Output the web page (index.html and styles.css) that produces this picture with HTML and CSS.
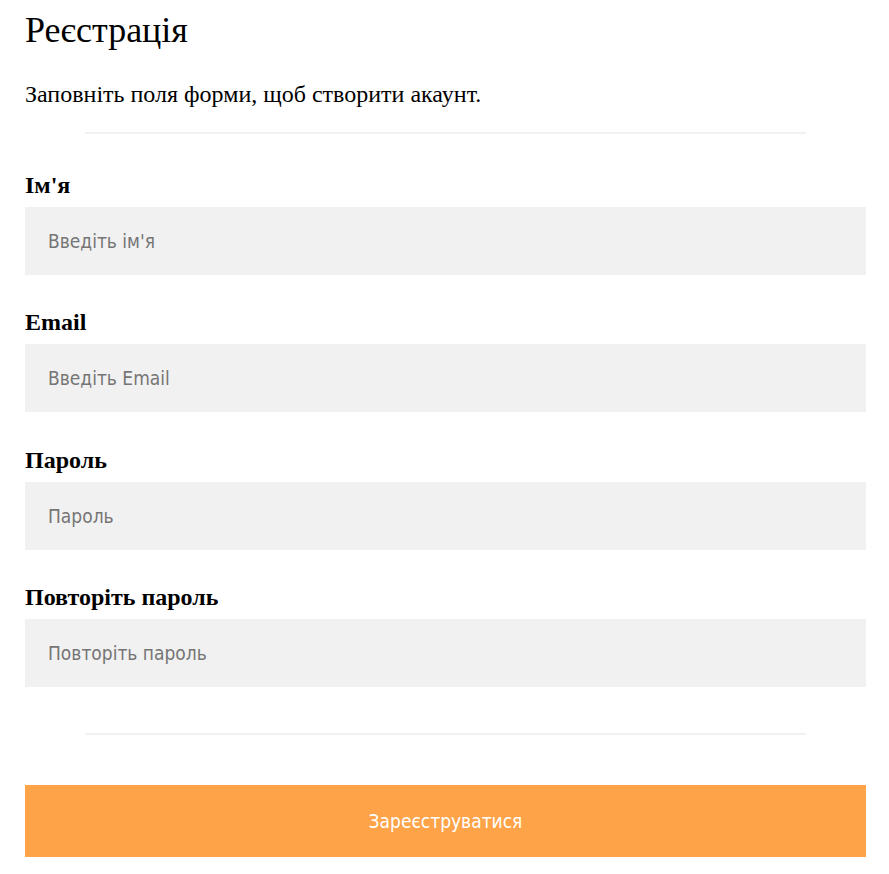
FILE: index.html
```html
<!DOCTYPE html>
<html lang="uk">
<head>
<meta charset="utf-8">
<title>Реєстрація</title>
<link rel="stylesheet" href="styles.css">
</head>
<body>
<form class="form">
  <h1 class="title">Реєстрація</h1>
  <p class="intro">Заповніть поля форми, щоб створити акаунт.</p>
  <hr class="divider">
  <label class="label" for="name">Ім'я</label>
  <input class="field" type="text" id="name" placeholder="Введіть ім'я">
  <label class="label" for="email">Email</label>
  <input class="field" type="text" id="email" placeholder="Введіть Email">
  <label class="label" for="psw">Пароль</label>
  <input class="field" type="password" id="psw" placeholder="Пароль">
  <label class="label" for="psw2">Повторіть пароль</label>
  <input class="field" type="password" id="psw2" placeholder="Повторіть пароль">
  <hr class="divider divider-bottom">
  <button class="submit" type="button">Зареєструватися</button>
</form>
</body>
</html>
```
FILE: styles.css
```css
html, body {
  margin: 0;
  padding: 0;
  background: #ffffff;
}
.form {
  display: flex;
  flex-direction: column;
  padding: 9px 23px 17px 25px;
  font-family: "Liberation Serif", "Times New Roman", serif;
  color: #000;
}
.title {
  margin: 0;
  font-size: 36px;
  line-height: 42px;
  font-weight: normal;
}
.intro {
  margin: 30px 0 0;
  font-size: 24px;
  line-height: 26px;
}
.divider {
  margin: 25px 60px 0;
  height: 0;
  border: 0;
  border-top: 1px solid #f1f1f1;
  border-bottom: 1px solid #f1f1f1;
}
.label {
  display: block;
  margin-top: 38px;
  font-size: 24px;
  line-height: 26px;
  font-weight: bold;
}
.field + .label {
  margin-top: 34.33px;
}
.field {
  margin: 9px 0 0;
  height: 68px;
  box-sizing: border-box;
  padding: 0 23px;
  border: 0;
  outline: none;
  background: #f1f1f1;
  font-family: "DejaVu Sans Condensed", "DejaVu Sans", Verdana, sans-serif;
  font-stretch: condensed;
  font-size: 19px;
  color: #333;
}
.field::placeholder {
  color: #757575;
}
.divider-bottom {
  margin-top: 46px;
}
.submit {
  margin-top: 50px;
  height: 72px;
  border: 0;
  background: #fea347;
  color: #ffffff;
  font-family: "DejaVu Sans Condensed", "DejaVu Sans", Verdana, sans-serif;
  font-stretch: condensed;
  font-size: 19px;
  cursor: pointer;
}
```
